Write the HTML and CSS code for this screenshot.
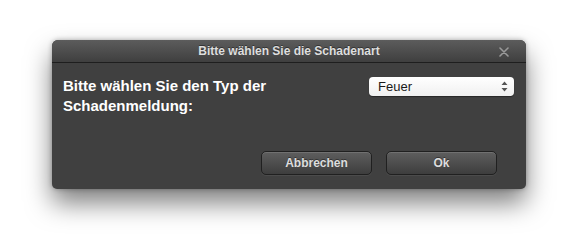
FILE: index.html
```html
<!DOCTYPE html>
<html>
<head>
<meta charset="utf-8">
<link rel="stylesheet" href="styles.css">
</head>
<body>
<div class="stage">
  <div class="window">
    <div class="titlebar">
      <span class="title">Bitte wählen Sie die Schadenart</span>
      <svg class="close" width="10" height="10" viewBox="0 0 10 10"><path d="M1 1 L9 9 M9 1 L1 9" stroke="#9a9a9a" stroke-width="1.6" stroke-linecap="round"/></svg>
    </div>
    <div class="content">
      <div class="row">
        <div class="label">Bitte wählen Sie den Typ der<br>Schadenmeldung:</div>
        <div class="select">
          <span class="value">Feuer</span>
          <svg class="arrows" width="7" height="11" viewBox="0 0 7 11"><path d="M3.5 0.5 L6.5 4 L0.5 4 Z M0.5 7 L6.5 7 L3.5 10.5 Z" fill="#555"/></svg>
        </div>
      </div>
      <div class="buttons">
        <button class="btn">Abbrechen</button>
        <button class="btn">Ok</button>
      </div>
    </div>
  </div>
</div>
</body>
</html>
```
FILE: styles.css
```css
html, body {
  margin: 0;
  padding: 0;
  background: #ffffff;
}
.stage {
  padding: 40px 0 0 52px;
  width: 570px;
  height: 250px;
  box-sizing: border-box;
}
.window {
  width: 474px;
  height: 149px;
  background: #404040;
  border-radius: 6px 6px 5px 5px;
  box-shadow: 0 14px 26px rgba(0,0,0,0.5), 0 0 5px rgba(0,0,0,0.3);
  display: flex;
  flex-direction: column;
  font-family: "Liberation Sans", Arial, sans-serif;
  overflow: hidden;
}
.titlebar {
  height: 23px;
  box-sizing: border-box;
  border-bottom: 1px solid #1e1e1e;
  background: linear-gradient(#5c5c5c, #3f3f3f);
  display: flex;
  align-items: center;
  justify-content: center;
  position: relative;
}
.title {
  color: #dedede;
  font-size: 12px;
  font-weight: bold;
  text-shadow: 0 -1px 0 rgba(0,0,0,0.4);
}
.close {
  position: absolute;
  right: 17px;
  top: 7px;
}
.content {
  flex: 1;
  display: flex;
  flex-direction: column;
  padding: 13px 12px 14px 11px;
}
.row {
  display: flex;
  justify-content: space-between;
  align-items: flex-start;
}
.label {
  color: #ffffff;
  font-size: 15px;
  font-weight: bold;
  line-height: 20px;
}
.select {
  margin-top: 1px;
  width: 145px;
  height: 19px;
  box-sizing: border-box;
  background: linear-gradient(#ffffff, #f0f0f0);
  border-radius: 4px;
  display: flex;
  align-items: center;
  justify-content: space-between;
  padding: 0 6px 0 9px;
  box-shadow: 0 1px 1px rgba(0,0,0,0.4);
}
.value {
  font-size: 13px;
  color: #1a1a1a;
}
.buttons {
  margin-top: auto;
  display: flex;
  justify-content: flex-end;
  gap: 14px;
  padding-right: 17px;
}
.btn {
  width: 111px;
  height: 24px;
  box-sizing: border-box;
  border: 1px solid #202020;
  border-radius: 5px;
  background: linear-gradient(#5e5e5e, #3d3d3d);
  box-shadow: inset 0 1px 0 rgba(255,255,255,0.12), 0 1px 0 rgba(255,255,255,0.06);
  color: #dddddd;
  font-family: "Liberation Sans", Arial, sans-serif;
  font-size: 12px;
  font-weight: bold;
  padding: 0;
  text-shadow: 0 -1px 0 rgba(0,0,0,0.4);
}
```
